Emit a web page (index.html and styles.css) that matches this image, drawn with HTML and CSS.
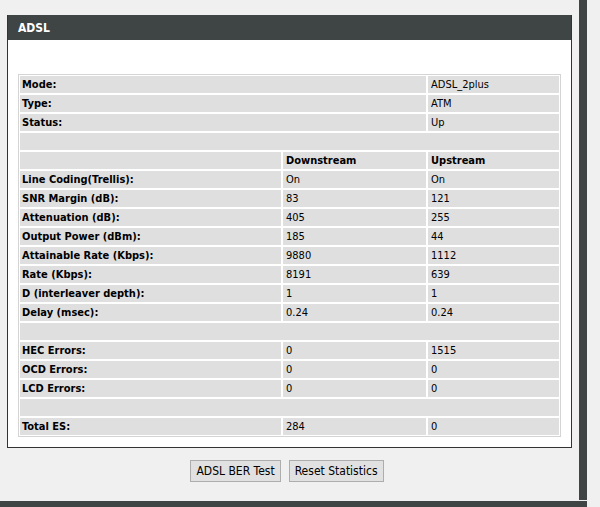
FILE: index.html
```html
<!DOCTYPE html>
<html>
<head>
<meta charset="utf-8">
<link rel="stylesheet" href="styles.css">
</head>
<body>
<div class="page">
  <div class="main">
    <div class="panel">
      <div class="panel-head">ADSL</div>
      <div class="panel-body">
        <table class="stats">
          <colgroup><col class="c1"><col class="c2"><col class="c3"></colgroup>
          <tr><td class="lbl" colspan="2">Mode:</td><td>ADSL_2plus</td></tr>
          <tr><td class="lbl" colspan="2">Type:</td><td>ATM</td></tr>
          <tr><td class="lbl" colspan="2">Status:</td><td>Up</td></tr>
          <tr><td colspan="3">&nbsp;</td></tr>
          <tr><td>&nbsp;</td><td class="lbl">Downstream</td><td class="lbl">Upstream</td></tr>
          <tr><td class="lbl">Line Coding(Trellis):</td><td>On</td><td>On</td></tr>
          <tr><td class="lbl">SNR Margin (dB):</td><td>83</td><td>121</td></tr>
          <tr><td class="lbl">Attenuation (dB):</td><td>405</td><td>255</td></tr>
          <tr><td class="lbl">Output Power (dBm):</td><td>185</td><td>44</td></tr>
          <tr><td class="lbl">Attainable Rate (Kbps):</td><td>9880</td><td>1112</td></tr>
          <tr><td class="lbl">Rate (Kbps):</td><td>8191</td><td>639</td></tr>
          <tr><td class="lbl">D (interleaver depth):</td><td>1</td><td>1</td></tr>
          <tr><td class="lbl">Delay (msec):</td><td>0.24</td><td>0.24</td></tr>
          <tr><td colspan="3">&nbsp;</td></tr>
          <tr><td class="lbl">HEC Errors:</td><td>0</td><td>1515</td></tr>
          <tr><td class="lbl">OCD Errors:</td><td>0</td><td>0</td></tr>
          <tr><td class="lbl">LCD Errors:</td><td>0</td><td>0</td></tr>
          <tr><td colspan="3">&nbsp;</td></tr>
          <tr><td class="lbl">Total ES:</td><td>284</td><td>0</td></tr>
        </table>
      </div>
    </div>
    <div class="actions">
      <button class="btn">ADSL BER Test</button>
      <button class="btn">Reset Statistics</button>
    </div>
  </div>
  <div class="rbar"></div>
</div>
<div class="bbar"></div>
</body>
</html>
```
FILE: styles.css
```css
html, body {
  margin: 0;
  padding: 0;
  background: #f0f0f0;
  font-family: Tahoma, "DejaVu Sans Condensed", "DejaVu Sans", sans-serif;
  font-size: 11px;
  color: #000;
}
.page {
  display: flex;
  height: 500px;
}
.main {
  width: 572px;
  padding: 15px 0 0 7px;
}
.rbar {
  width: 8px;
  height: 500px;
  background: #3f4444;
}
.bbar {
  width: 587px;
  height: 6px;
  margin-top: 1px;
  background: #3f4444;
}
.panel {
  width: 563px;
  border: 1px solid #333;
  border-top: none;
  background: #fff;
}
.panel-head {
  height: 25px;
  line-height: 26px;
  padding-left: 10px;
  background: #3f4444;
  color: #fff;
  font-weight: bold;
  font-size: 12px;
}
.panel-body {
  padding: 34px 0 10px 10px;
}
.stats {
  width: 543px;
  table-layout: fixed;
  border-collapse: separate;
  border-spacing: 0;
  border: 1px solid #d4d4d4;
  background: #fff;
}
.c1 { width: 263px; }
.c2 { width: 145px; }
.c3 { width: 133px; }
.stats td {
  height: 17px;
  padding: 0 2px 0 2px;
  border: 1px solid #fff;
  background: #dfdfdf;
  white-space: nowrap;
  overflow: hidden;
  line-height: 17px;
  box-sizing: border-box;
}
.stats td + td { padding-left: 3px; }
.stats .lbl { font-weight: bold; }
.actions {
  display: flex;
  justify-content: center;
  gap: 8px;
  margin-top: 12px;
  padding-right: 12px;
}
.btn {
  height: 22px;
  padding: 0 5px;
  border: 1px solid #adadad;
  background: #e1e1e1;
  font-family: Tahoma, "DejaVu Sans Condensed", "DejaVu Sans", sans-serif;
  font-size: 12px;
  color: #000;
}
```
